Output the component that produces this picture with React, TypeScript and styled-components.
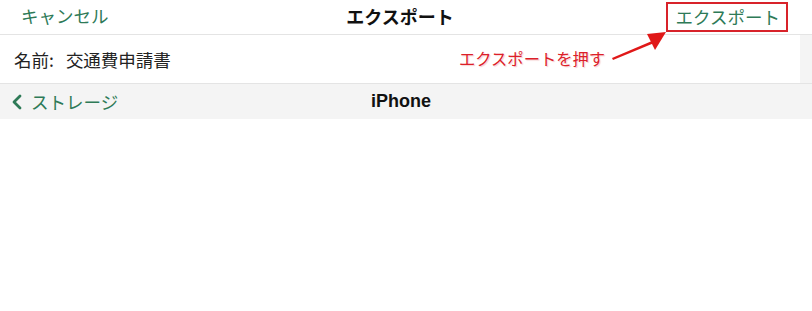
import styled, { createGlobalStyle } from "styled-components";

const GlobalStyle = createGlobalStyle`
    body {
        margin: 0;
        background: #ffffff;
        font-family: "Noto Sans CJK JP", "Noto Sans", sans-serif;
    }
`

const green = "#2e7a57";

const StyledPage = styled.div`
    position: relative;
    width: 812px;
    height: 311px;
    background: #ffffff;
    overflow: hidden;
`

const StyledNav = styled.header`
    display: grid;
    grid-template-columns: 1fr auto 1fr;
    align-items: center;
    height: 30px;
    padding: 0 29px 4px 17px;
    border-bottom: 1px solid #e4e4e4;
`

const StyledNavButton = styled.span<{ $align?: "left" | "right" }>`
    justify-self: ${(p) => (p.$align === "right" ? "end" : "start")};
    margin: ${(p) => (p.$align === "right" ? "0 -5px 0 0" : "0 0 0 4px")};
    color: ${green};
    font-size: 17.5px;
    line-height: 1;
`

const StyledTitle = styled.h1`
    margin: 0;
    font-size: 18px;
    font-weight: 700;
    color: #111;
    line-height: 1;
`

const StyledHighlight = styled.span`
    display: inline-block;
    border: 2px solid #d8232a;
    padding: 4px 6px 4px 8px;
    margin-top: 2px;
`

const StyledNameRow = styled.div`
    display: flex;
    background: #f4f4f4;
    border-bottom: 1px solid #e4e4e4;
`

const StyledNameCell = styled.div`
    flex: 1;
    margin-right: 12px;
    height: 48px;
    display: flex;
    align-items: center;
    padding-left: 14px;
    background: #ffffff;
    font-size: 17.5px;
    color: #222;
`

const StyledLabel = styled.span`
    margin-right: 12px;
`

const StyledPathBar = styled.div`
    display: grid;
    grid-template-columns: 1fr auto 1fr;
    align-items: center;
    height: 35px;
    background: #f4f4f4;
    padding: 0 21px 0 11px;
`

const StyledBack = styled.span`
    display: flex;
    align-items: center;
    gap: 9px;
    color: ${green};
    font-size: 17.5px;
`

const StyledPathTitle = styled.span`
    font-size: 18px;
    font-weight: 700;
    color: #111;
    font-family: "Liberation Sans", "Noto Sans", sans-serif;
`

const StyledNote = styled.span`
    position: absolute;
    left: 459px;
    top: 48px;
    font-size: 16.3px;
    color: #dc2029;
    text-shadow: 0 0 2px #fff, 1px 1px 1px #f3c7c7;
    line-height: 20px;
`

const StyledArrow = styled.svg`
    position: absolute;
    left: 608px;
    top: 26px;
`

export default function App() {
    return (
        <StyledPage>
            <GlobalStyle />
            <StyledNav>
                <StyledNavButton>キャンセル</StyledNavButton>
                <StyledTitle>エクスポート</StyledTitle>
                <StyledNavButton $align="right">
                    <StyledHighlight>エクスポート</StyledHighlight>
                </StyledNavButton>
            </StyledNav>
            <StyledNameRow>
                <StyledNameCell>
                    <StyledLabel>名前:</StyledLabel>交通費申請書
                </StyledNameCell>
            </StyledNameRow>
            <StyledPathBar>
                <StyledBack>
                    <svg width="11" height="16" viewBox="0 0 11 16">
                        <path d="M9 2 L3 8 L9 14" fill="none" stroke={green} strokeWidth="2.8" strokeLinecap="round" strokeLinejoin="round" />
                    </svg>
                    ストレージ
                </StyledBack>
                <StyledPathTitle>iPhone</StyledPathTitle>
                <span />
            </StyledPathBar>
            <StyledNote>エクスポートを押す</StyledNote>
            <StyledArrow width="64" height="40" viewBox="0 0 64 40">
                <path d="M4 32 L44 15 L45 17.5 L5 34 Z" fill="#e01818" />
                <path d="M58 6 L39 8 L47 24 Z" fill="#e01818" />
            </StyledArrow>
        </StyledPage>
    );
}
